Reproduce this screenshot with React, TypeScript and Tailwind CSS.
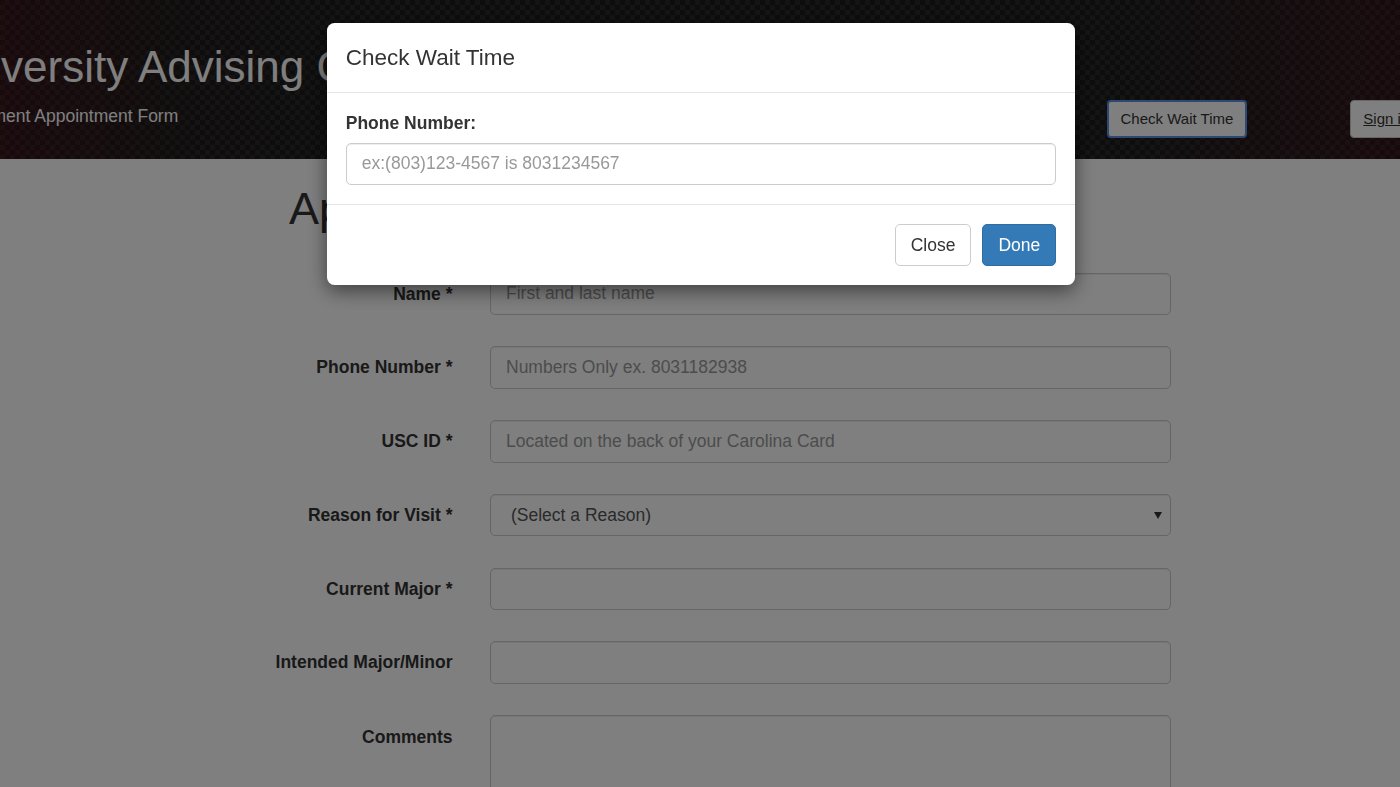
import React from 'react';

const fields = [
  { label: 'Name *', placeholder: 'First and last name' },
  { label: 'Phone Number *', placeholder: 'Numbers Only ex. 8031182938' },
  { label: 'USC ID *', placeholder: 'Located on the back of your Carolina Card' },
];

function Field({ label, children }: { label: string; children: React.ReactNode }) {
  return (
    <div className="grid grid-cols-[212.5px_681px] items-center gap-x-[37.5px]">
      <label className="text-right text-[17.5px] font-bold text-[#333]">{label}</label>
      {children}
    </div>
  );
}

const inputCls =
  'h-[42.5px] w-full rounded-[5px] border border-[#ccc] bg-white px-[15px] text-[17.5px] text-[#555] shadow-[inset_0_1px_1px_rgba(0,0,0,0.075)] outline-none placeholder:text-[#999]';

export default function App() {
  return (
    <div className="relative h-screen w-full overflow-hidden bg-white font-['Liberation_Sans',Arial,sans-serif] text-[#333]">
      {/* Header */}
      <header className="flex h-[159px] overflow-hidden bg-[image:linear-gradient(90deg,rgba(110,0,20,0.28)_0%,rgba(60,0,10,0.1)_12%,transparent_24%,transparent_80%,rgba(110,0,20,0.24)_100%),repeating-conic-gradient(#292929_0%_25%,#1b1b1b_0%_50%)] bg-[length:100%_100%,10px_10px]">
        <div className="-ml-[65px] w-[1172px] shrink-0 pt-[43px]">
          <h1 className="whitespace-nowrap text-[44px] leading-[1.1] text-white">University Advising Center</h1>
          <p className="mt-[13px] whitespace-nowrap pl-[4px] text-[17.5px] leading-[25px] text-white">
            Advisement Appointment Form
          </p>
        </div>
        <div className="flex shrink-0 self-end pb-[21.5px]">
          <button className="h-[37.5px] rounded-[4px] border-2 border-[#5a90e6] bg-white px-[11.5px] text-[15px] text-[#333]">
            Check Wait Time
          </button>
          <button className="ml-[103px] h-[37.5px] shrink-0 rounded-[4px] border border-[#ccc] bg-white px-[12.5px] text-[15px] text-[#333] underline">
            Sign in
          </button>
        </div>
      </header>

      {/* Form */}
      <main className="pl-[240px]">
        <h2 className="ml-[49px] mt-[25px] text-[45px] leading-[1.1] text-[#333]">Appointment Request</h2>
        <form className="mt-[39px] flex flex-col gap-y-[31.25px]">
          {fields.map((f) => (
            <Field key={f.label} label={f.label}>
              <input className={inputCls} placeholder={f.placeholder} />
            </Field>
          ))}
          <Field label="Reason for Visit *">
            <div className="relative">
              <select className={inputCls + ' appearance-none pl-[20px] text-[#555]'} defaultValue="">
                <option value="">(Select a Reason)</option>
              </select>
              <svg className="pointer-events-none absolute right-[9px] top-[18px]" width="8" height="7" viewBox="0 0 8 7">
                <path d="M0 0h8L4 7z" fill="#333" />
              </svg>
            </div>
          </Field>
          <Field label="Current Major *">
            <input className={inputCls} />
          </Field>
          <Field label="Intended Major/Minor">
            <input className={inputCls} />
          </Field>
          <div className="grid grid-cols-[212.5px_681px] items-start gap-x-[37.5px]">
            <label className="pt-[9px] text-right text-[17.5px] font-bold text-[#333]">Comments</label>
            <textarea className="h-[120px] w-full resize-none rounded-[5px] border border-[#ccc] bg-white shadow-[inset_0_1px_1px_rgba(0,0,0,0.075)] outline-none" />
          </div>
        </form>
      </main>

      {/* Backdrop + modal */}
      <div className="fixed inset-0 flex justify-center bg-black/50 pt-[23px]">
        <div className="ml-[2px] h-fit w-[748px] rounded-[7.5px] bg-white shadow-[0_6px_19px_rgba(0,0,0,0.5)]">
          <div className="border-b border-[#e5e5e5] p-[18.75px]">
            <h4 className="text-[22.5px] leading-[31px] text-[#333]">Check Wait Time</h4>
          </div>
          <div className="p-[18.75px]">
            <label className="mb-[6.25px] block text-[17.5px] font-bold leading-[25px] text-[#333]">Phone Number:</label>
            <input className={inputCls} placeholder="ex:(803)123-4567 is 8031234567" />
          </div>
          <div className="flex justify-end gap-[11px] border-t border-[#e5e5e5] p-[18.75px]">
            <button className="h-[42.5px] rounded-[5px] border border-[#ccc] bg-white px-[15px] text-[17.5px] text-[#333]">
              Close
            </button>
            <button className="h-[42.5px] rounded-[5px] border border-[#2e6da4] bg-[#337ab7] px-[15px] text-[17.5px] text-white">
              Done
            </button>
          </div>
        </div>
      </div>
    </div>
  );
}
